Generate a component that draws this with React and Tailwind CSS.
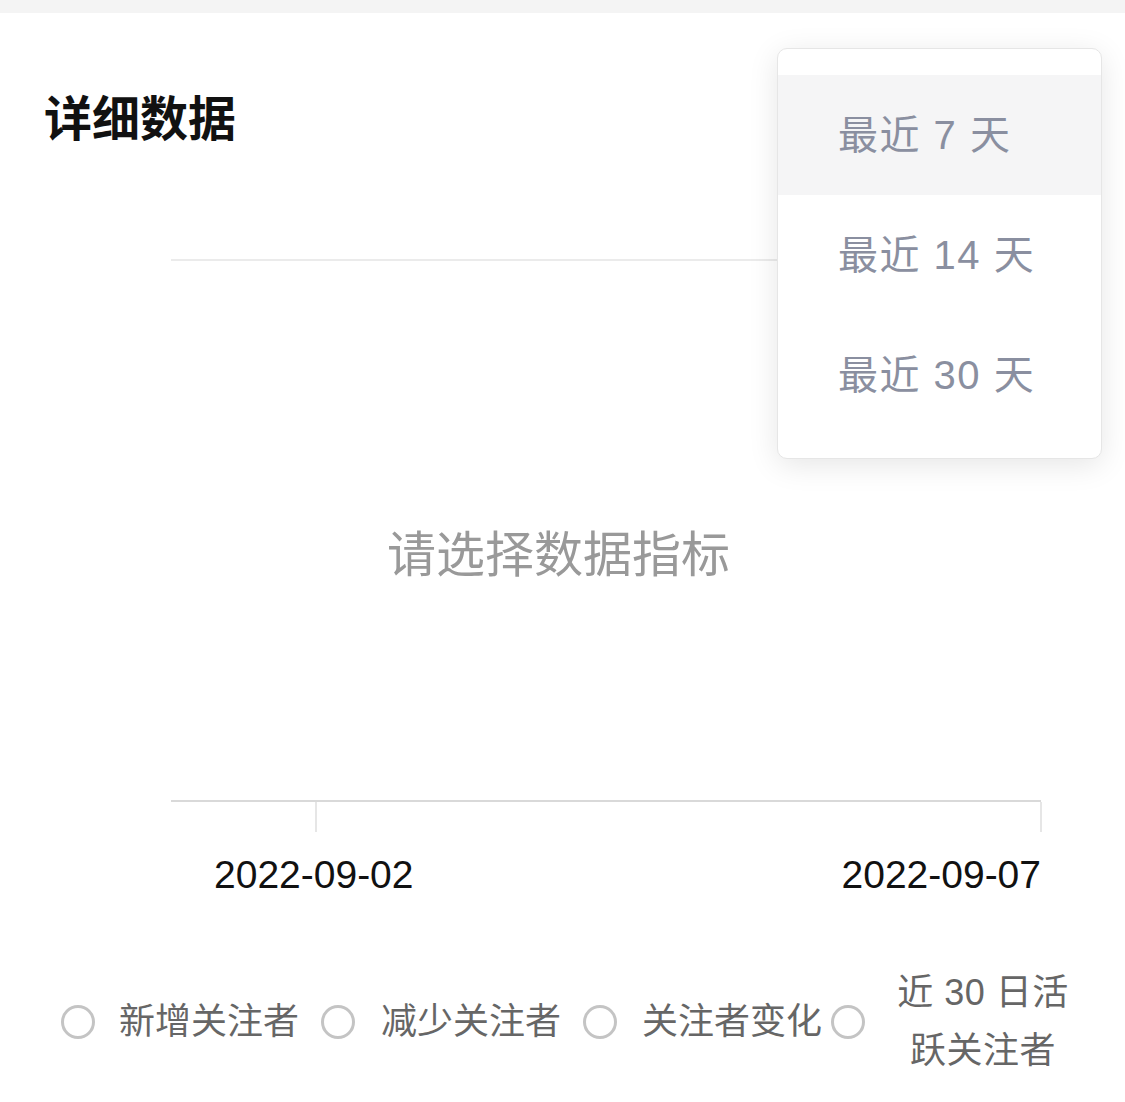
import React from "react";

const FONT = { fontFamily: '"Liberation Sans", "Noto Sans CJK SC", sans-serif' };

function Radio({ className = "" }) {
  return (
    <span
      className={`block w-[34px] h-[34px] shrink-0 rounded-full border-[3px] border-[#c4c4c4] bg-white ${className}`}
    />
  );
}

export default function App() {
  const options = ["最近 7 天", "最近 14 天", "最近 30 天"];
  return (
    <div
      className="relative w-[1125px] h-[1102px] bg-white overflow-hidden text-black"
      style={FONT}
    >
      <div className="h-[13px] bg-[#f4f4f4]" />

      {/* Title */}
      <div className="mt-[75px] pl-[44px] h-[64px] flex items-center">
        <h2 className="text-[48px] leading-[64px] font-bold text-[#111]">详细数据</h2>
      </div>

      {/* Chart */}
      <div className="mt-[107px] h-[543px] flex flex-col">
        <div className="ml-[171px] w-[870px] h-[2px] bg-[#ebebeb]" />
        <div className="flex-1 flex items-center justify-center pt-[48px] pr-[8px]">
          <span className="text-[49px] leading-[60px] text-[#999999]">请选择数据指标</span>
        </div>
        <div className="ml-[171px] w-[870px] h-[2px] bg-[#d9d9d9]" />
      </div>
      <div className="flex h-[30px]">
        <div className="ml-[315px] w-[2px] h-full bg-[#e6e6e6]" />
        <div className="ml-[723px] w-[2px] h-full bg-[#e6e6e6]" />
      </div>
      <div className="mt-[21px] flex h-[44px] items-center">
        <span className="ml-[214px] text-[39px] leading-[44px] text-[#111]">2022-09-02</span>
        <span className="ml-auto mr-[84px] text-[39px] leading-[44px] text-[#111]">2022-09-07</span>
      </div>

      {/* Radios */}
      <div className="mt-[67px] pl-[61px] flex items-center">
        <Radio />
        <span className="ml-[24px] text-[36px] leading-[58px] text-[#666] whitespace-nowrap">新增关注者</span>
        <Radio className="ml-[22px]" />
        <span className="ml-[26px] text-[36px] leading-[58px] text-[#666] whitespace-nowrap">减少关注者</span>
        <Radio className="ml-[22px]" />
        <span className="ml-[25px] text-[36px] leading-[58px] text-[#666] whitespace-nowrap">关注者变化</span>
        <Radio className="ml-[9px]" />
        <span className="ml-[22px] w-[192px] text-center text-[36px] leading-[58px] text-[#666] tracking-[0.5px]">
          近 30 日活跃关注者
        </span>
      </div>

      {/* Dropdown */}
      <div className="absolute left-[777px] top-[48px] w-[325px] h-[411px] rounded-[10px] border border-[#e6e6e6] bg-white shadow-[0_6px_30px_rgba(0,0,0,0.1)] pt-[26px]">
        {options.map((o, i) => (
          <div
            key={o}
            className={`h-[120px] flex items-center pl-[60px] text-[40px] tracking-[1.5px] text-[#8a8fa0] ${
              i === 0 ? "bg-[#f5f5f6]" : ""
            }`}
          >
            {o}
          </div>
        ))}
      </div>
    </div>
  );
}
